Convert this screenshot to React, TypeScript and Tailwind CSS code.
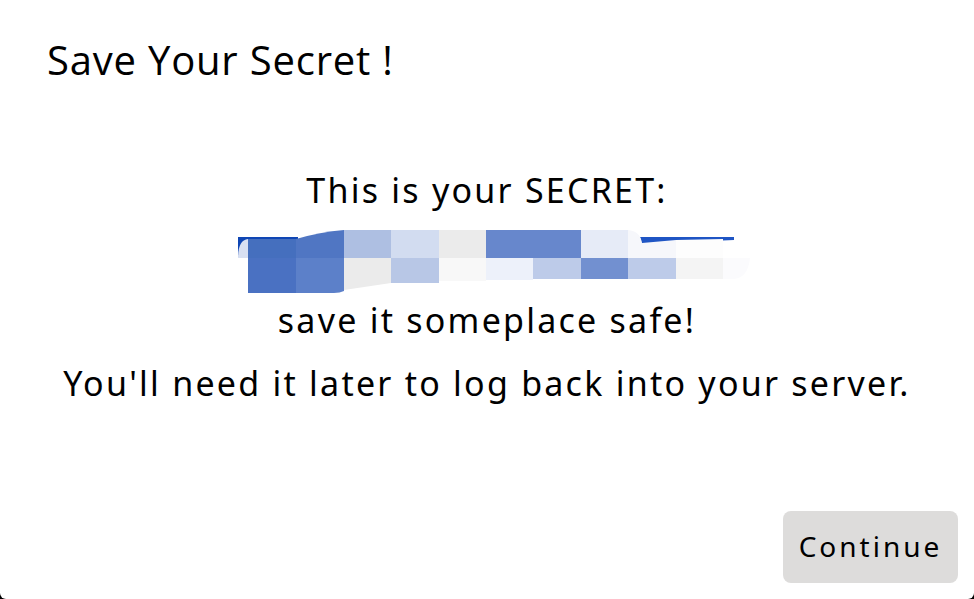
export default function App() {
  const top = [
    [344, 47, "#aebfe2"], [391, 48, "#d2dcf0"], [439, 47, "#ebebeb"], [486, 47, "#6787cc"], [533, 48, "#6787cc"], [581, 47, "#e6ebf7"],
  ] as const;
  const bottom = [
    [391, 48, "#b8c7e6", 25], [439, 47, "#f8f8f8", 23], [486, 47, "#edf1fa", 22], [533, 48, "#bdcbe9", 21], [581, 47, "#7290d0", 21], [628, 48, "#bdcbe9", 21], [676, 47, "#f4f4f4", 21],
  ] as const;
  return (
    <div className="w-[974px] h-[599px] bg-black overflow-hidden font-['Noto_Sans',sans-serif]">
      <div className="w-full h-full bg-white rounded-b-[6px] flex flex-col text-black">
        <h1 className="pl-[47px] pt-[34px] text-[40px] leading-[52px] tracking-[0.8px] font-normal font-['Open_Sans',sans-serif]">Save Your Secret !</h1>
        <div className="mt-[82px] flex flex-col items-center text-[34px] leading-[44px] tracking-[2.24px]">
          <p>This is your SECRET:</p>
          <svg className="block mt-[17px] mb-[3px] ml-[6px]" width="520" height="66" viewBox="230 229 520 66">
            <path d="M238 237 H298 V258 H238 Z" fill="#0f46b4" />
            <path d="M640 237 H734 V240 L642 244 Z" fill="#1f55c4" />
            <path d="M238 258 Q238 240 248 239 H296 V258 Z" fill="#d8e0f2" />
            <rect x="248" y="239" width="48" height="19" fill="#456fbe" />
            <path d="M296 239 Q320 232 344 230 V258 H296 Z" fill="#5076c3" />
            <rect x="248" y="258" width="48" height="35" fill="#4a71c2" />
            <path d="M296 258 H344 V291 Q340 293 334 293 H296 Z" fill="#5c80c9" />
            <path d="M344 258 H391 V283 L344 290 Z" fill="#ebebeb" />
            {top.map(([x, w, c]) => <rect key={x} x={x} y="230" width={w} height="28" fill={c} />)}
            <path d="M628 230 Q640 231 642 243 L676 240 V258 H628 Z" fill="#f6f7fb" />
            <path d="M676 240 L723 239 V258 H676 Z" fill="#fdfdfd" />
            {bottom.map(([x, w, c, h]) => <rect key={x} x={x} y="258" width={w} height={h} fill={c} />)}
            <path d="M723 258 H750 Q748 279 732 279 H723 Z" fill="#fbfbfd" />
          </svg>
          <p>save it someplace safe!</p>
          <p className="mt-[19px]">You'll need it later to log back into your server.</p>
        </div>
        <div className="mt-auto flex justify-end pr-[16px] pb-[16px]">
          <button className="w-[175px] h-[72px] pb-[2px] rounded-[8px] bg-[#dddcdb] text-[28px] tracking-[3px]">Continue</button>
        </div>
      </div>
    </div>
  );
}
